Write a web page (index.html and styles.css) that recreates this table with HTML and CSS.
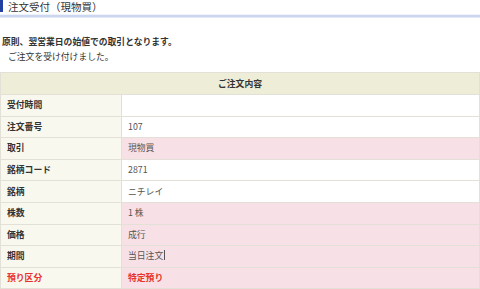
FILE: index.html
```html
<!doctype html>
<html>
<head>
    <meta http-equiv="Content-Type" content="text/html" charset="utf-8">
    <title>注文受付（現物買）</title>
    <link rel="stylesheet" href="styles.css">
</head>
<body>
    <div class="page">
        <h2 class="ttl">注文受付（現物買）</h2>
        <p class="note">原則、翌営業日の始値での取引となります。</p>
        <p class="msg">ご注文を受け付けました。</p>

        <table class="order">
            <tr>
                <th colspan="2" class="head">ご注文内容</th>
            </tr>
            <tr>
                <th>受付時間</th>
                <td></td>
            </tr>
            <tr>
                <th>注文番号</th>
                <td>107</td>
            </tr>
            <tr class="pk">
                <th>取引</th>
                <td>現物買</td>
            </tr>
            <tr>
                <th>銘柄コード</th>
                <td>2871</td>
            </tr>
            <tr>
                <th>銘柄</th>
                <td>ニチレイ</td>
            </tr>
            <tr class="pk">
                <th>株数</th>
                <td>1 株</td>
            </tr>
            <tr class="pk">
                <th>価格</th>
                <td>成行</td>
            </tr>
            <tr class="pk">
                <th>期間</th>
                <td>当日注文<span class="caret"></span></td>
            </tr>
            <tr class="pk red">
                <th>預り区分</th>
                <td>特定預り</td>
            </tr>
        </table>
    </div>
</body>
</html>
```

FILE: styles.css
```css
*{margin:0; padding:0;}
body{
    font-family:"Noto Sans CJK JP", "Liberation Sans", sans-serif;
    color:#333;
    background:#fff;
}
.page{
    width:480px;
}
/* 見出し：左の青帯と下の二重ライン */
.ttl{
    position:relative;
    height:14px;
    padding-left:8px;
    font-size:10.5px;
    font-weight:normal;
    line-height:13px;
    color:#333;
    box-shadow:0 1px 0 #eef2fa, 0 3px 0 #ccd7ef, 0 4px 0 #e3e9f7;
}
.ttl:before{
    content:"";
    position:absolute;
    left:0;
    top:0;
    width:3px;
    height:12px;
    background:#2440a0;
}
.note{
    margin-top:22px;
    font-size:8.8px;
    font-weight:bold;
    line-height:12px;
    padding-left:2px;
}
.msg{
    margin-top:3px;
    font-size:8.8px;
    line-height:12px;
    padding-left:8px;
}
.order{
    width:480px;
    margin-top:9px;
    border-collapse:collapse;
    font-size:8.8px;
    border:1px solid #dcdad0;
}
.order th,
.order td{
    height:20.6px;
    padding:0 6px;
    border:1px solid #e3e1d7;
    text-align:left;
    line-height:20px;
}
.order th{
    width:108px;
    background:#f9f8ef;
    font-weight:bold;
    color:#333;
}
.order td{
    background:#fff;
    color:#555;
}
.order th.head{
    text-align:center;
    background:#eeedd7;
    height:21px;
}
.order .pk td{
    background:#f7e1e7;
}
.order .red th,
.order .red td{
    color:#e8332b;
    font-weight:bold;
}
.caret{
    display:inline-block;
    width:1px;
    height:10px;
    margin-left:1px;
    vertical-align:-1px;
    background:#555;
}
```
